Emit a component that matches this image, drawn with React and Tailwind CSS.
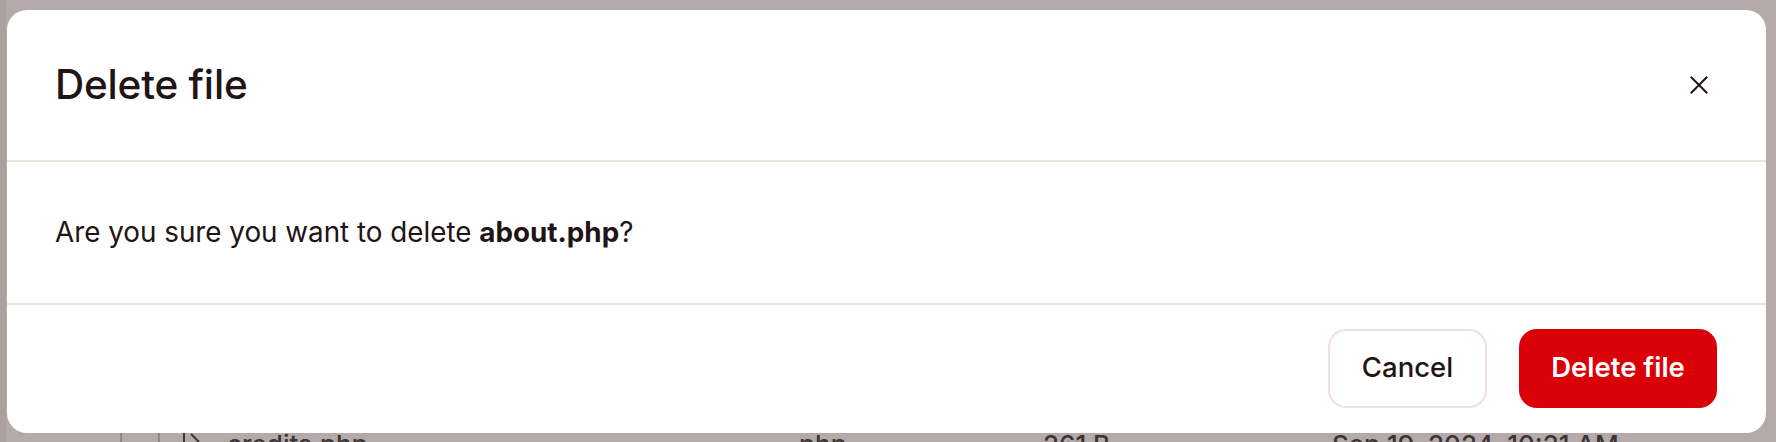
import React from "react"

// Background page row (mostly hidden behind the dialog overlay)
function FileRow() {
	return (
		<div className="flex items-start h-[40px] pl-[114px] text-[#3b3334] text-[26px] font-medium leading-none">
			<div className="w-[38px] h-full border-l-2 border-[#8f8585]" />
			<div className="w-[69px] h-full border-l-2 border-[#8f8585] pl-[22px] pt-[2px]">
				<svg width="22" height="22" viewBox="0 0 22 22" fill="none" stroke="#3b3334" strokeWidth="2">
					<path d="M2 2v18" />
					<path d="M9 4l8 8" />
				</svg>
			</div>
			<div className="w-[572px] pt-[4px]">credits.php</div>
			<div className="w-[244px] pt-[4px]">php</div>
			<div className="w-[289px] pt-[4px]">261 B</div>
			<div className="pt-[4px]">Sep 19, 2024, 10:21 AM</div>
		</div>
	)
}

function DeleteDialog({ fileName }) {
	return (
		<div className="absolute left-[7px] top-[10px] w-[1759px] h-[423px] bg-white rounded-[20px] flex flex-col text-[#221315]">
			{/* Header */}
			<div className="h-[152px] shrink-0 flex items-center justify-between pl-[48px] pr-[58px] border-b-2 border-[#ede2dc]">
				<h2 className="text-[40.5px] font-medium tracking-[-0.2px]">Delete file</h2>
				<button className="w-[18px] h-[18px] flex items-center justify-center">
					<svg width="18" height="18" viewBox="0 0 18 18" fill="none" stroke="#221315" strokeWidth="2" strokeLinecap="square">
						<path d="M1.5 1.5l15 15" />
						<path d="M16.5 1.5l-15 15" />
					</svg>
				</button>
			</div>

			{/* Body */}
			<div className="h-[143px] shrink-0 flex items-center px-[48px] border-b-2 border-[#ede2dc]">
				<p className="text-[27.8px]">
					Are you sure you want to delete <span className="font-bold">{fileName}</span>?
				</p>
			</div>

			{/* Footer */}
			<div className="flex-1 flex items-center justify-end gap-[32px] pr-[49px] pb-[2px]">
				<button className="w-[159px] h-[79px] rounded-[18px] border-2 border-[#ede2dc] text-[27.5px] font-medium">
					Cancel
				</button>
				<button className="w-[198px] h-[79px] rounded-[18px] bg-[#d90007] text-white text-[27.5px] font-semibold">
					Delete file
				</button>
			</div>
		</div>
	)
}

export default function App() {
	return (
		<div
			className="relative w-full h-[442px] overflow-hidden bg-[#b4aaa9]"
			style={{ fontFamily: "Inter, 'Noto Sans', sans-serif" }}
		>
			<div className="h-full flex flex-col border-l-[6px] border-[#aaa09f]">
				<div className="h-[428px] shrink-0" />
				<FileRow />
			</div>
			<DeleteDialog fileName="about.php" />
		</div>
	)
}
